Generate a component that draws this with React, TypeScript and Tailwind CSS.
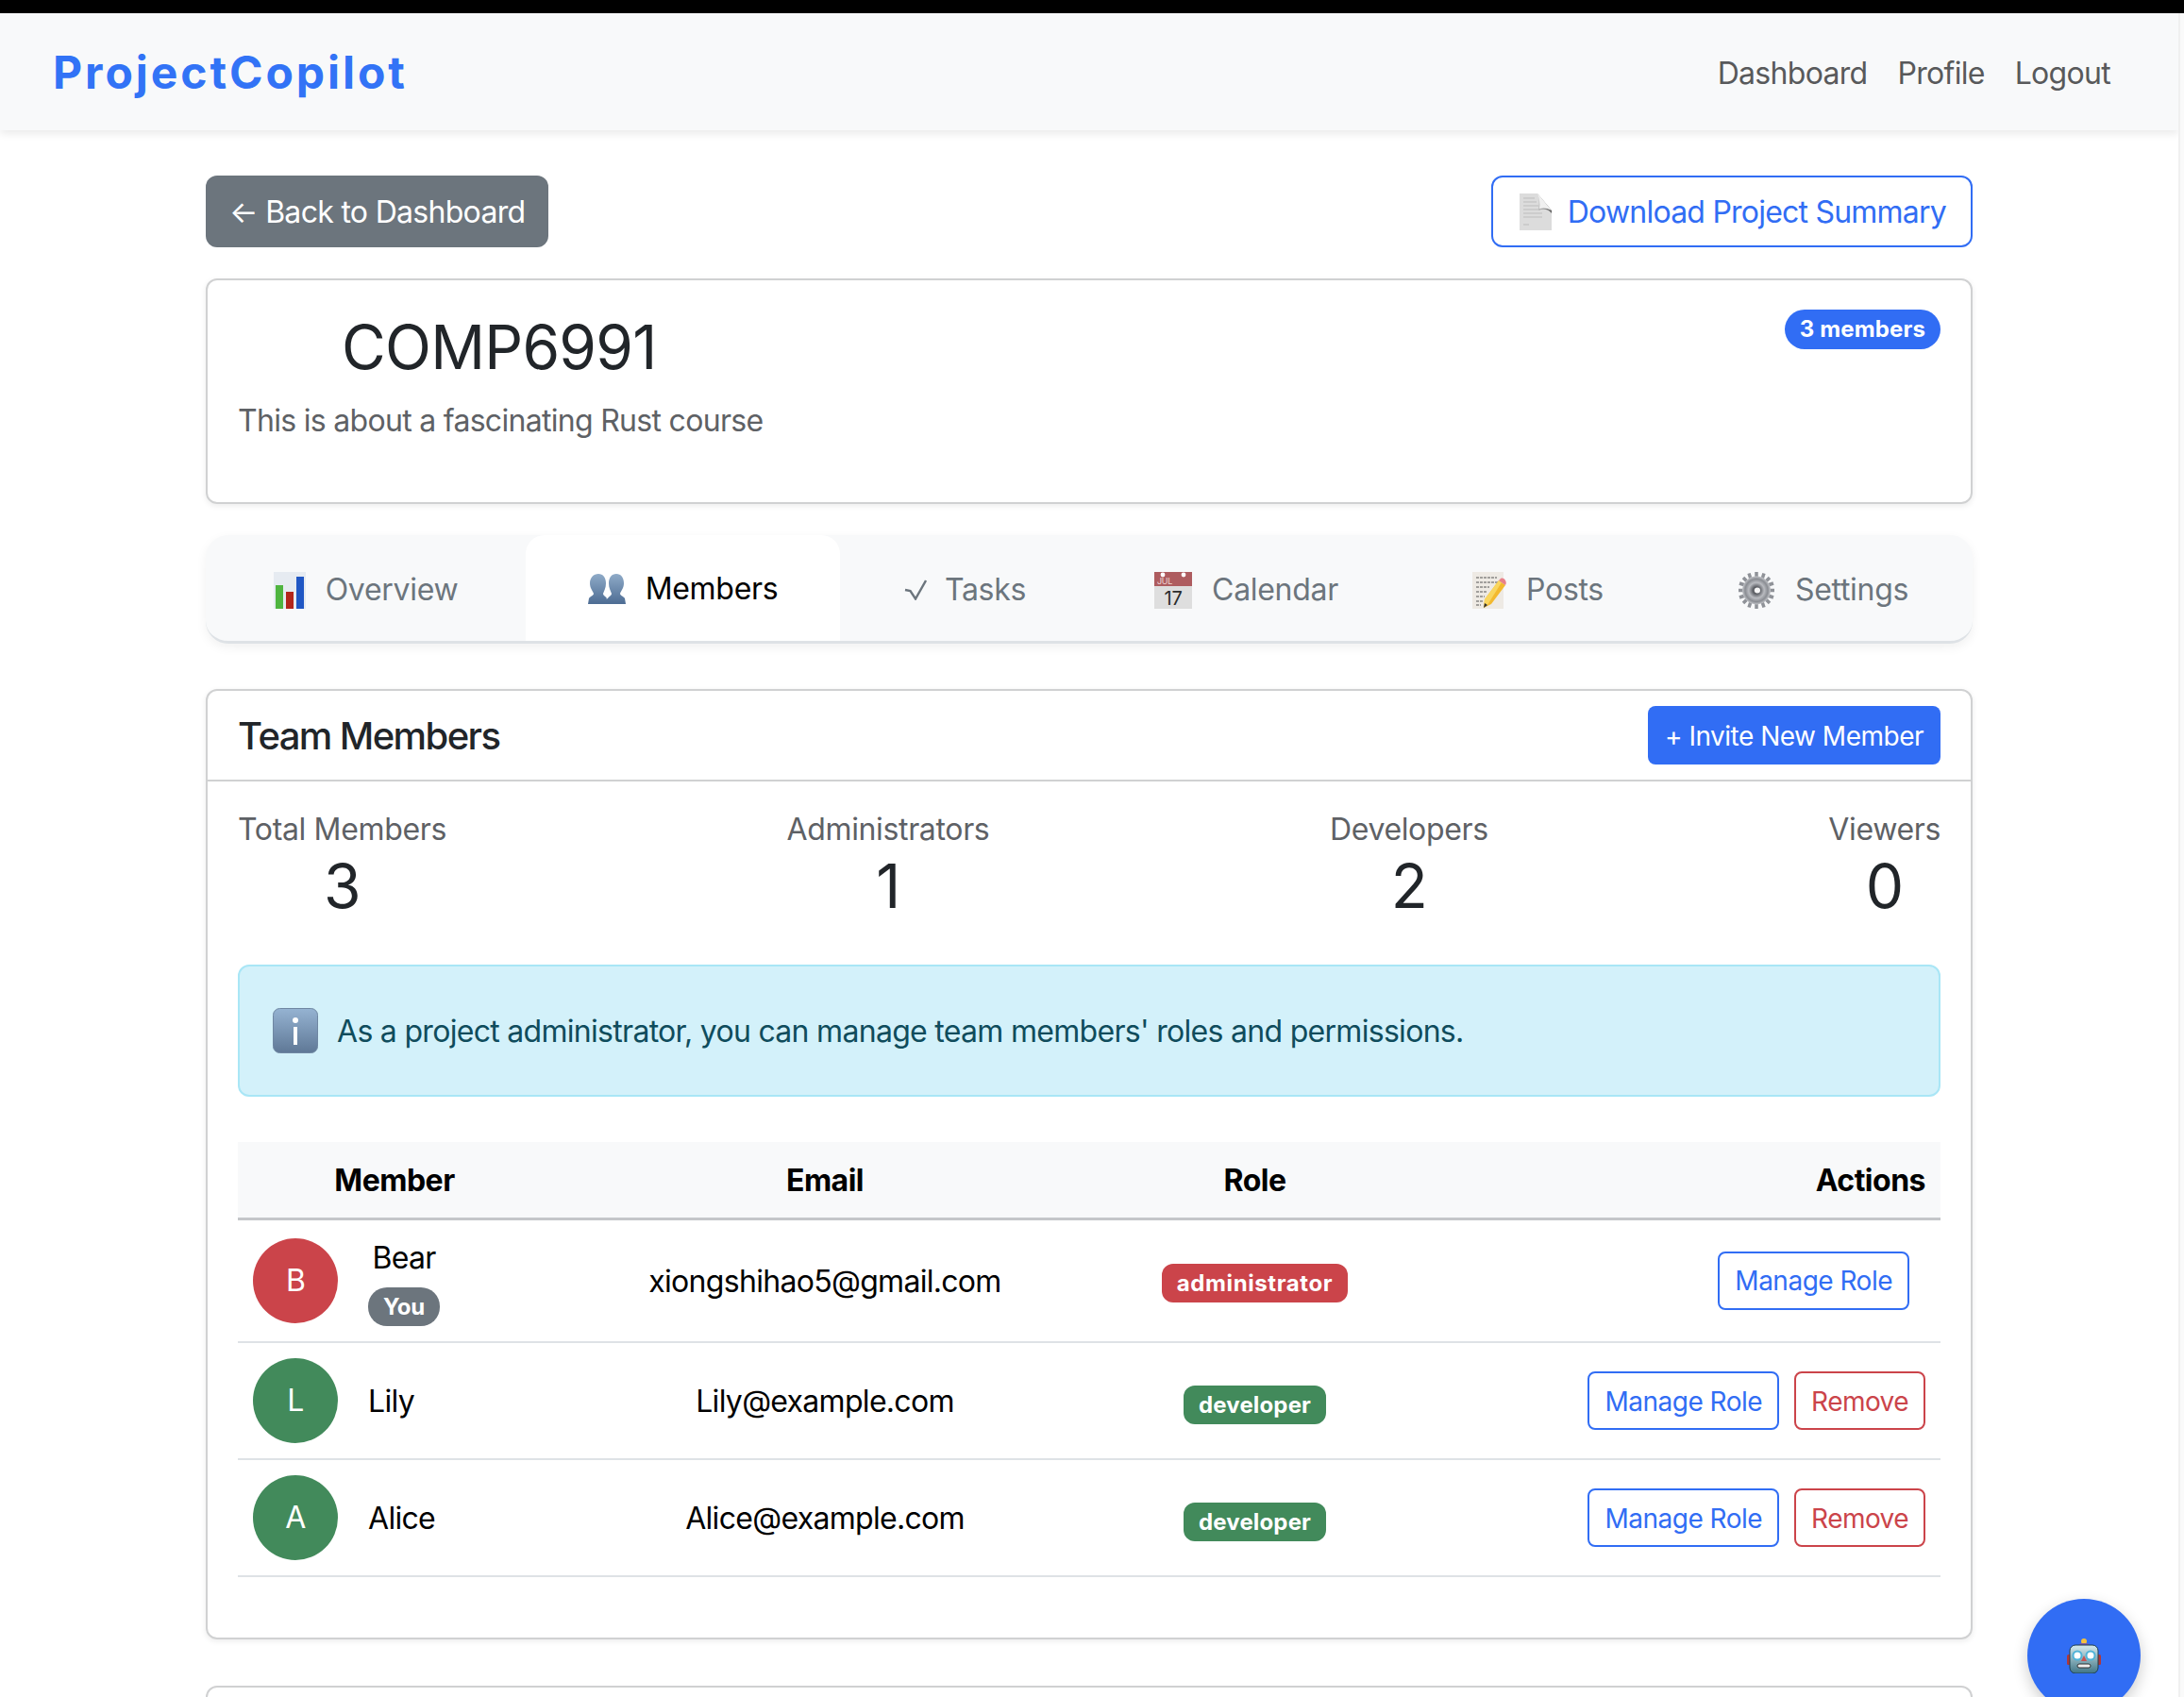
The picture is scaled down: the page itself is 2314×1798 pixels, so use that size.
import { ReactNode } from "react";

function ChartIcon() {
  return (
    <svg width="34" height="39" viewBox="0 0 34 39" className="shrink-0">
      <rect width="34" height="39" fill="#e6ebf1" />
      <rect x="2" y="14" width="8" height="25" fill="#4fb53f" />
      <rect x="13" y="21" width="8" height="18" fill="#b3261b" />
      <rect x="24" y="5" width="8" height="34" fill="#2057c4" />
    </svg>
  );
}

function BustsIcon() {
  return (
    <svg width="40" height="32" viewBox="0 0 40 32" className="shrink-0">
      <defs>
        <linearGradient id="bust" x1="0" y1="0" x2="0" y2="1">
          <stop offset="0" stopColor="#8fabc8" />
          <stop offset="1" stopColor="#4d6c93" />
        </linearGradient>
      </defs>
      <path d="M11 0c5 0 8 4 8 10 0 5-2 8-3 11 0 2 3 3 4 5l-1 1 2-1c1-2 4-3 4-5-1-3-3-6-3-11 0-6 3-10 8-10s8 4 8 10c0 5-3 8-4 11 0 2 4 3 5 5l1 6H0l1-6c1-2 5-3 5-5-1-3-4-6-4-11C2 4 6 0 11 0z" fill="url(#bust)" />
    </svg>
  );
}

function CheckIcon() {
  return (
    <svg width="24" height="22" viewBox="0 0 24 22" className="-mr-[2px] shrink-0">
      <path d="M1 11l5.5 1L12 20.5 23 1" fill="none" stroke="#6c757d" strokeWidth="2.4" />
    </svg>
  );
}

function CalendarIcon() {
  return (
    <svg width="40" height="39" viewBox="0 0 40 39" className="shrink-0">
      <rect width="40" height="39" fill="#dedede" />
      <rect width="40" height="15" fill="#ae5c5f" />
      <circle cx="9" cy="3" r="2.4" fill="#fff" />
      <circle cx="31" cy="3" r="2.4" fill="#fff" />
      <text x="3" y="13" fontSize="9" fill="#edd5d5" fontFamily="Inter, sans-serif">JUL</text>
      <text x="20" y="35" fontSize="20" textAnchor="middle" fill="#2b2b2b" fontFamily="Inter, sans-serif">17</text>
    </svg>
  );
}

function MemoIcon() {
  return (
    <svg width="36" height="39" viewBox="0 0 36 39" className="shrink-0">
      <rect width="33" height="39" fill="#eeeae4" />
      <path d="M4 6h22M4 11h24M4 16h14M4 21h12M4 26h9M4 31h7M4 35h5" stroke="#555" strokeWidth="1.2" strokeDasharray="3 1" />
      <path d="M28 9l7 5-15 20-8 4 1-9z" fill="#f3b92e" />
      <path d="M28 9l3 2-15 24-4 3 1-9z" fill="#f9d65f" />
      <path d="M28 9l2-2c2-1 4 0 5 2s1 3 0 5z" fill="#e8818a" />
      <path d="M12 38l1-5 3 2z" fill="#333" />
    </svg>
  );
}

function GearIcon() {
  return (
    <svg width="40" height="39" viewBox="0 0 40 39" className="shrink-0">
      <defs>
        <radialGradient id="gear">
          <stop offset="0" stopColor="#f2f2f2" />
          <stop offset="0.22" stopColor="#55585e" />
          <stop offset="0.55" stopColor="#b9bbc0" />
          <stop offset="0.8" stopColor="#8a8d93" />
          <stop offset="1" stopColor="#c2c4c8" />
        </radialGradient>
      </defs>
      <g stroke="#8f9298" strokeWidth="3.5">
        <path d="M20 0v6M20 33v6M1 19.5h6M33 19.5h6M6 6l5 5M29 28l5 5M34 6l-5 5M11 28l-5 5M12 1.5l2 6M26 31.5l2 6M28 1.5l-2 6M14 31.5l-2 6M2 12l6 2M32 25l6 2M38 12l-6 2M8 25l-6 2" />
      </g>
      <circle cx="20" cy="19.5" r="15" fill="url(#gear)" />
      <circle cx="21" cy="19.5" r="3" fill="#f7f7f7" />
    </svg>
  );
}

function DocIcon() {
  return (
    <svg width="34" height="39" viewBox="0 0 34 39" className="shrink-0">
      <defs>
        <linearGradient id="curl" x1="0" y1="0" x2="1" y2="0">
          <stop offset="0" stopColor="#c9c9c9" />
          <stop offset="1" stopColor="#5d5d5d" />
        </linearGradient>
      </defs>
      <path d="M0 0h19l15 18v21H0z" fill="#dcdcdc" />
      <path d="M4 5h12M4 9h14M4 13h16M4 17h18M4 21h20M4 25h20M4 33h6" stroke="#bdbdbd" strokeWidth="1" />
      <path d="M19 0c3 8 1 14 1 18 5-2 10-2 14 3V18z" fill="url(#curl)" />
      <path d="M19 0l15 18c-5-3-9-3-13-2 1-5 0-10-2-16z" fill="#f0f0f0" />
    </svg>
  );
}

function InfoIcon() {
  return (
    <svg width="48" height="48" viewBox="0 0 48 48" className="shrink-0">
      <defs>
        <linearGradient id="info" x1="0" y1="0" x2="0" y2="1">
          <stop offset="0" stopColor="#95b3d2" />
          <stop offset="1" stopColor="#5f7896" />
        </linearGradient>
      </defs>
      <rect x="0.5" y="0.5" width="47" height="47" rx="7" fill="url(#info)" stroke="#6f87a2" />
      <circle cx="24" cy="13" r="3" fill="#fff" />
      <rect x="22" y="20" width="4" height="19" fill="#fff" />
    </svg>
  );
}

function RobotIcon() {
  return (
    <svg width="36" height="37" viewBox="0 0 36 37">
      <defs>
        <linearGradient id="robot" x1="0" y1="0" x2="0" y2="1">
          <stop offset="0" stopColor="#d6ebef" />
          <stop offset="1" stopColor="#3f7485" />
        </linearGradient>
      </defs>
      <ellipse cx="18" cy="3" rx="3" ry="3" fill="#f4c13d" />
      <rect x="13" y="5" width="10" height="4" rx="2" fill="#7b5ca8" />
      <rect x="0" y="17" width="4" height="11" rx="1.5" fill="#b0373a" />
      <rect x="32" y="17" width="4" height="11" rx="1.5" fill="#b0373a" />
      <rect x="3" y="7" width="30" height="30" rx="6" fill="url(#robot)" stroke="#1f3f4d" strokeWidth="1" />
      <circle cx="11" cy="18" r="4.5" fill="#fff" stroke="#4fb3d8" strokeWidth="2" />
      <circle cx="25" cy="18" r="4.5" fill="#fff" stroke="#4fb3d8" strokeWidth="2" />
      <path d="M18 18l3 6h-6z" fill="#c65353" />
      <rect x="11" y="27" width="14" height="4" rx="2" fill="#eee" stroke="#333" strokeWidth="1" />
    </svg>
  );
}

const tabs: { label: string; icon: ReactNode; width: string; active?: boolean }[] = [
  { label: "Overview", icon: <ChartIcon />, width: "w-[339px]" },
  { label: "Members", icon: <BustsIcon />, width: "w-[333px]", active: true },
  { label: "Tasks", icon: <CheckIcon />, width: "w-[265px]" },
  { label: "Calendar", icon: <CalendarIcon />, width: "w-[331px]" },
  { label: "Posts", icon: <MemoIcon />, width: "w-[287px]" },
  { label: "Settings", icon: <GearIcon />, width: "w-[317px]" },
];

const stats = [
  { label: "Total Members", value: 3 },
  { label: "Administrators", value: 1 },
  { label: "Developers", value: 2 },
  { label: "Viewers", value: 0 },
];

const members = [
  { name: "Bear", email: "xiongshihao5@gmail.com", role: "administrator", you: true },
  { name: "Lily", email: "Lily@example.com", role: "developer", you: false },
  { name: "Alice", email: "Alice@example.com", role: "developer", you: false },
];

function MemberRow({ m }: { m: (typeof members)[number] }) {
  const isAdmin = m.role === "administrator";
  return (
    <tr className={m.you ? "h-[131px]" : "h-[124px]"}>
      <td className="border-b-2 border-[#dee2e6] px-4">
        <div className="flex items-center gap-8">
          <div className={`flex h-[90px] w-[90px] items-center justify-center rounded-full text-white ${isAdmin ? "bg-[#cb444a]" : "bg-[#428a5b]"}`}>
            {m.name[0]}
          </div>
          {m.you ? (
            <div className="flex flex-col items-center">
              <span className="leading-[48px]">{m.name}</span>
              <span className="mt-[7px] rounded-[20px] bg-[#6c757d] px-4 py-[8px] text-[24px] font-bold leading-[25px] tracking-[-0.2px] text-white">You</span>
            </div>
          ) : (
            <span className="pt-[2px]">{m.name}</span>
          )}
        </div>
      </td>
      <td className="border-b-2 border-[#dee2e6] pt-[2px] text-center">{m.email}</td>
      <td className={`border-b-2 border-[#dee2e6] text-center ${isAdmin ? "" : "pt-[3px]"}`}>
        <span className={`inline-block rounded-[12px] px-4 py-[8px] text-[24px] font-bold leading-[25px] text-white ${isAdmin ? "bg-[#cb444a] tracking-[0.6px]" : "bg-[#428a5b] tracking-[0.15px]"}`}>
          {m.role}
        </span>
      </td>
      <td className="border-b-2 border-[#dee2e6] pr-4">
        <div className="flex justify-end gap-4">
          <button className={`h-[62px] rounded-[8px] border-2 border-[#316df4] bg-white px-[16px] pt-[1px] text-[28px] tracking-[-0.5px] text-[#316df4] ${m.you ? "mr-[17px]" : ""}`}>
            Manage Role
          </button>
          {!m.you && (
            <button className="h-[62px] rounded-[8px] border-2 border-[#cb444a] bg-white px-[16px] pt-[1px] text-[28px] tracking-[-0.55px] text-[#cb444a]">
              Remove
            </button>
          )}
        </div>
      </td>
    </tr>
  );
}

export default function App() {
  return (
    <div className="relative h-[1798px] w-[2314px] overflow-hidden bg-white font-['Inter',sans-serif] text-[32px] tracking-[-0.7px] text-[#212529]">
      <div className="h-[14px] bg-black" />
      <div className="flex">
        <main className="w-[2308px]">
          <nav className="flex h-[124px] items-center justify-between bg-[#f8f9fa] pl-[56px] pr-[72px] shadow-[0_4px_8px_rgba(0,0,0,0.08)]">
            <span className="pt-[2px] text-[48px] font-bold tracking-[2.95px] text-[#3273f6]">ProjectCopilot</span>
            <div className="flex gap-8 pt-[3px] text-[#58595b]">
              <a>Dashboard</a>
              <a>Profile</a>
              <a>Logout</a>
            </div>
          </nav>

          <div className="mx-auto w-[1872px] pt-[48px]">
            <div className="mb-[33px] flex items-center justify-between">
              <button className="h-[76px] rounded-[12px] bg-[#6c757d] pl-[25px] pr-[25px] pt-[1px] text-white">← Back to Dashboard</button>
              <button className="flex h-[76px] items-center gap-[17px] rounded-[12px] border-2 border-[#316df4] bg-white pl-[28px] pr-[26px] text-[#316df4]">
                <DocIcon />
                <span className="pt-[1px] tracking-[-0.78px]">Download Project Summary</span>
              </button>
            </div>

            {/* Project header */}
            <div className="mb-[33px] flex h-[239px] items-start justify-between rounded-[12px] border-2 border-[#d0d1d2] p-8 shadow-[0_2px_6px_rgba(0,0,0,0.08)]">
              <div>
                <h1 className="mb-4 pl-[110px] text-[64px] font-normal leading-[77px] tracking-[-0.75px]">COMP6991</h1>
                <p className="leading-[48px] text-[#5e6165]">This is about a fascinating Rust course</p>
              </div>
              <span className="-mt-[1px] rounded-full bg-[#316df4] px-4 py-[8px] text-[24px] font-bold leading-[26px] tracking-[0.15px] text-white">3 members</span>
            </div>

            {/* Tabs */}
            <div className="mb-[48px] flex h-[115px] rounded-[24px] border-b-[3px] border-[#dee2e6] bg-[#f8f9fa] shadow-[0_4px_12px_rgba(0,0,0,0.06)]">
              {tabs.map((t) => (
                <div
                  key={t.label}
                  className={`flex flex-none items-center justify-center gap-[21px] rounded-t-[20px] tracking-[-0.3px] ${t.width} ${t.active ? "bg-white pt-[2px] text-black" : "pt-[4px] text-[#6c757d]"}`}
                >
                  {t.icon}
                  <span>{t.label}</span>
                </div>
              ))}
            </div>

            {/* Team members */}
            <div className="mb-[49px] rounded-[12px] border-2 border-[#d0d1d2] shadow-[0_2px_6px_rgba(0,0,0,0.08)]">
              <div className="flex h-[96px] items-center justify-between border-b-2 border-[#d0d1d2] px-8">
                <h2 className="pt-[1px] text-[40px] font-medium tracking-[-1.6px]">Team Members</h2>
                <button className="h-[62px] rounded-[8px] bg-[#316df4] px-[18px] pt-[1px] text-[28px] tracking-[-0.5px] text-white">+ Invite New Member</button>
              </div>
              <div className="px-8 pb-8 pt-[29px]">
                <div className="mb-[45px] flex justify-between">
                  {stats.map((s) => (
                    <div key={s.label} className="text-center">
                      <div className="leading-[43px] tracking-[-0.35px] text-[#5e6165]">{s.label}</div>
                      <div className="text-[64px] leading-[77px]">{s.value}</div>
                    </div>
                  ))}
                </div>

                <div className="mb-[48px] flex h-[140px] items-center gap-[20px] rounded-[12px] border-2 border-[#a9e6f6] bg-[#d3f1fa] px-[35px] text-[#0f4c5c]">
                  <InfoIcon />
                  <span className="pt-[2px]">As a project administrator, you can manage team members' roles and permissions.</span>
                </div>

                <table className="mb-8 w-full table-fixed text-black">
                  <colgroup>
                    <col className="w-[332px]" />
                    <col className="w-[580px]" />
                    <col className="w-[331px]" />
                    <col className="w-[561px]" />
                  </colgroup>
                  <thead>
                    <tr className="h-[81px] bg-[#f8f9fa] tracking-[-0.5px]">
                      <th className="border-b-[3px] border-[#c4c6c9] pt-[2px] text-center font-bold">Member</th>
                      <th className="border-b-[3px] border-[#c4c6c9] pt-[2px] text-center font-bold">Email</th>
                      <th className="border-b-[3px] border-[#c4c6c9] pt-[2px] text-center font-bold">Role</th>
                      <th className="border-b-[3px] border-[#c4c6c9] pr-4 pt-[2px] text-right font-bold">Actions</th>
                    </tr>
                  </thead>
                  <tbody>
                    {members.map((m) => (
                      <MemberRow key={m.name} m={m} />
                    ))}
                  </tbody>
                </table>
              </div>
            </div>

            <div className="h-[200px] rounded-[12px] border-2 border-[#d0d1d2]" />
          </div>
        </main>
        <div className="w-[6px] self-stretch border-l-2 border-[#f0f0f0] bg-[#fafafa]" />
      </div>

      {/* Chat button */}
      <button className="absolute bottom-[-16px] left-[2148px] flex h-[120px] w-[120px] items-center justify-center rounded-full bg-[#316df4] shadow-[0_6px_16px_rgba(0,0,0,0.2)]">
        <RobotIcon />
      </button>
    </div>
  );
}
